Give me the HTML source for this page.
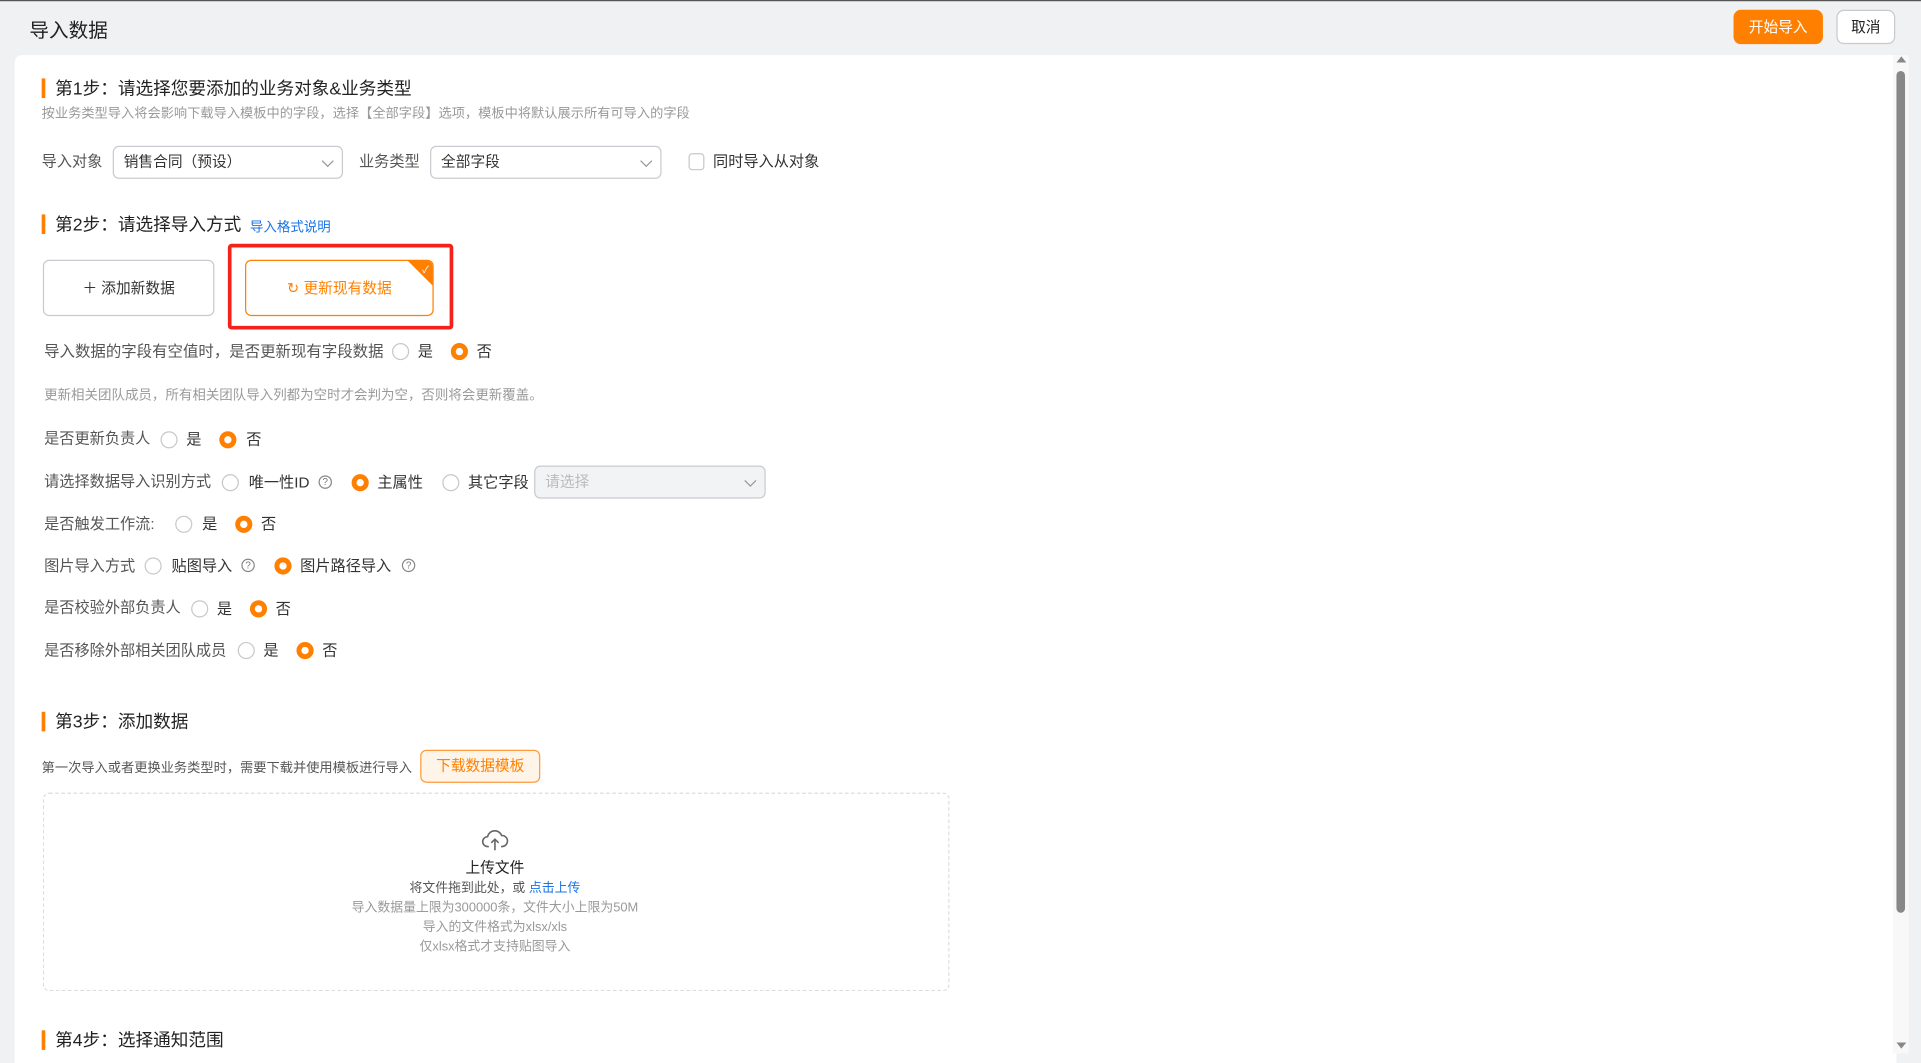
<!DOCTYPE html>
<html><head><meta charset="utf-8"><style>
*{margin:0;padding:0;box-sizing:border-box}
html,body{width:1921px;height:1063px;overflow:hidden;background:#f0f1f3}
#w{position:absolute;left:0;top:0;width:1568px;height:868px;transform:scale(1.2251);transform-origin:0 0;font-family:"Liberation Sans","Noto Sans CJK SC",sans-serif;color:#333;font-size:12px}
.a{position:absolute;white-space:nowrap}
.h{font-size:14.4px;color:#222;line-height:18px}
.bar{position:absolute;width:3px;height:16px;background:#ff8000}
.r{position:absolute;width:14px;height:14px;border:1px solid #c8c8cc;border-radius:50%;background:#fff}
.rc{position:absolute;width:14px;height:14px;border:4px solid #ff8000;border-radius:50%;background:#fff}
.t{line-height:14px;font-size:12.4px}
.q{position:absolute;width:11px;height:11px;border:1px solid #888;border-radius:50%;font-size:8px;line-height:9px;text-align:center;color:#777}
.sel{position:absolute;border:1px solid #c9cbd0;border-radius:5px;background:#fff;height:27px;font-size:12px;line-height:25px;padding-left:8px}
.sel:after{content:"";position:absolute;right:8px;top:8px;width:6px;height:6px;border-right:1px solid #999;border-bottom:1px solid #999;transform:rotate(45deg)}
</style></head><body><div id="w">
<div class="a" style="left:0;top:0;width:1568px;height:1px;background:#555"></div>
<div class="a" style="left:24px;top:11px;font-size:16px;color:#222">导入数据</div>
<div class="a" style="left:1415px;top:8px;width:73px;height:28px;background:#ff8000;border-radius:6px;color:#fff;font-size:12px;line-height:28px;text-align:center">开始导入</div>
<div class="a" style="left:1499px;top:8px;width:48px;height:28px;background:#fff;border:1px solid #c8cad0;border-radius:6px;color:#222;font-size:12px;line-height:26px;text-align:center">取消</div>
<div class="a" style="left:12px;top:45px;width:1536px;height:823px;background:#fff;border-radius:6px 0 0 0"></div>
<div class="a" style="left:1545px;top:45px;width:13px;height:815px;background:#f8f8f8"></div>
<div class="a" style="left:1548px;top:46px;width:0;height:0;border-left:4px solid transparent;border-right:4px solid transparent;border-bottom:5px solid #888"></div>
<div class="a" style="left:1548px;top:58px;width:7px;height:687px;background:#888;border-radius:4px"></div>
<div class="a" style="left:1548px;top:851px;width:0;height:0;border-left:4px solid transparent;border-right:4px solid transparent;border-top:5px solid #888"></div>

<div class="bar" style="left:34px;top:64px"></div>
<div class="a h" style="left:45px;top:64px">第1步：请选择您要添加的业务对象&amp;业务类型</div>
<div class="a" style="left:34px;top:84px;font-size:10.8px;color:#999">按业务类型导入将会影响下载导入模板中的字段，选择【全部字段】选项，模板中将默认展示所有可导入的字段</div>
<div class="a t" style="left:34px;top:125px;color:#555">导入对象</div>
<div class="sel" style="left:92px;top:119px;width:188px">销售合同（预设）</div>
<div class="a t" style="left:293px;top:125px;color:#555">业务类型</div>
<div class="sel" style="left:351px;top:119px;width:189px">全部字段</div>
<div class="a" style="left:562px;top:125px;width:13px;height:14px;border:1px solid #c8c8cc;border-radius:3px"></div>
<div class="a t" style="left:582px;top:125px">同时导入从对象</div>

<div class="bar" style="left:34px;top:175px"></div>
<div class="a h" style="left:45px;top:175px">第2步：请选择导入方式</div>
<div class="a" style="left:204px;top:177px;font-size:11px;color:#1a73e8">导入格式说明</div>
<div class="a" style="left:35px;top:212px;width:140px;height:46px;border:1px solid #c8cad0;border-radius:5px;text-align:center;line-height:44px;font-size:12px">＋ 添加新数据</div>
<div class="a" style="left:186px;top:199px;width:184px;height:70px;border:3px solid #f5221b;border-radius:3px"></div>
<div class="a" style="left:200px;top:212px;width:154px;height:46px;border:1px solid #ff8000;border-radius:5px;text-align:center;line-height:44px;font-size:12px;color:#ff8000;overflow:hidden">↻ 更新现有数据<div style="position:absolute;right:-1px;top:-1px;width:0;height:0;border-left:22px solid transparent;border-top:22px solid #ff8000"></div><div style="position:absolute;right:3px;top:-14px;color:#fff;font-size:8px">✓</div></div>

<div class="a t" style="left:36px;top:280px;color:#555;font-size:12.6px">导入数据的字段有空值时，是否更新现有字段数据</div>
<div class="r" style="left:320px;top:280px"></div><div class="a t" style="left:341px;top:280px">是</div>
<div class="rc" style="left:368px;top:280px"></div><div class="a t" style="left:389px;top:280px">否</div>
<div class="a" style="left:36px;top:314px;font-size:11px;color:#999">更新相关团队成员，所有相关团队导入列都为空时才会判为空，否则将会更新覆盖。</div>

<div class="a t" style="left:36px;top:351px;color:#555">是否更新负责人</div>
<div class="r" style="left:131px;top:352px"></div><div class="a t" style="left:152px;top:352px">是</div>
<div class="rc" style="left:179px;top:352px"></div><div class="a t" style="left:201px;top:352px">否</div>

<div class="a t" style="left:36px;top:386px;color:#555">请选择数据导入识别方式</div>
<div class="r" style="left:181px;top:387px"></div><div class="a t" style="left:203px;top:387px">唯一性ID</div><div class="q" style="left:260px;top:388px">?</div>
<div class="rc" style="left:287px;top:387px"></div><div class="a t" style="left:308px;top:387px">主属性</div>
<div class="r" style="left:361px;top:387px"></div><div class="a t" style="left:382px;top:387px">其它字段</div>
<div class="sel" style="left:436px;top:380px;width:189px;background:#f2f3f5;color:#bbb">请选择</div>

<div class="a t" style="left:36px;top:421px;color:#555">是否触发工作流:</div>
<div class="r" style="left:143px;top:421px"></div><div class="a t" style="left:165px;top:421px">是</div>
<div class="rc" style="left:192px;top:421px"></div><div class="a t" style="left:213px;top:421px">否</div>

<div class="a t" style="left:36px;top:455px;color:#555">图片导入方式</div>
<div class="r" style="left:118px;top:455px"></div><div class="a t" style="left:140px;top:455px">贴图导入</div><div class="q" style="left:197px;top:456px">?</div>
<div class="rc" style="left:224px;top:455px"></div><div class="a t" style="left:245px;top:455px">图片路径导入</div><div class="q" style="left:328px;top:456px">?</div>

<div class="a t" style="left:36px;top:489px;color:#555">是否校验外部负责人</div>
<div class="r" style="left:156px;top:490px"></div><div class="a t" style="left:177px;top:490px">是</div>
<div class="rc" style="left:204px;top:490px"></div><div class="a t" style="left:225px;top:490px">否</div>

<div class="a t" style="left:36px;top:524px;color:#555">是否移除外部相关团队成员</div>
<div class="r" style="left:194px;top:524px"></div><div class="a t" style="left:215px;top:524px">是</div>
<div class="rc" style="left:242px;top:524px"></div><div class="a t" style="left:263px;top:524px">否</div>

<div class="bar" style="left:34px;top:581px"></div>
<div class="a h" style="left:45px;top:581px">第3步：添加数据</div>
<div class="a" style="left:34px;top:618px;font-size:10.8px;color:#555">第一次导入或者更换业务类型时，需要下载并使用模板进行导入</div>
<div class="a" style="left:343px;top:612px;width:98px;height:27px;background:#fff4e8;border:1px solid #ff9a3c;border-radius:5px;color:#ff8000;font-size:12px;line-height:25px;text-align:center">下载数据模板</div>
<div class="a" style="left:35px;top:647px;width:740px;height:162px;border:1px dashed #dcdde0;border-radius:5px"></div>
<svg class="a" style="left:393px;top:676px" width="22" height="20" viewBox="0 0 22 20" fill="none" stroke="#666" stroke-width="1.3"><path d="M6 15H5a4 4 0 0 1 0-8 6 6 0 0 1 11.5-1A4.5 4.5 0 0 1 17 15h-1"/><path d="M11 18V9M8 12l3-3 3 3"/></svg>
<div class="a" style="left:0;top:699px;width:808px;text-align:center;font-size:12px;color:#222">上传文件</div>
<div class="a" style="left:0;top:717px;width:808px;text-align:center;font-size:10.5px;color:#555">将文件拖到此处，或 <span style="color:#1a73e8">点击上传</span></div>
<div class="a" style="left:0;top:733px;width:808px;text-align:center;font-size:10.5px;color:#999">导入数据量上限为300000条，文件大小上限为50M</div>
<div class="a" style="left:0;top:749px;width:808px;text-align:center;font-size:10.5px;color:#999">导入的文件格式为xlsx/xls</div>
<div class="a" style="left:0;top:765px;width:808px;text-align:center;font-size:10.5px;color:#999">仅xlsx格式才支持贴图导入</div>

<div class="bar" style="left:34px;top:841px"></div>
<div class="a h" style="left:45px;top:841px">第4步：选择通知范围</div>
</div></body></html>
